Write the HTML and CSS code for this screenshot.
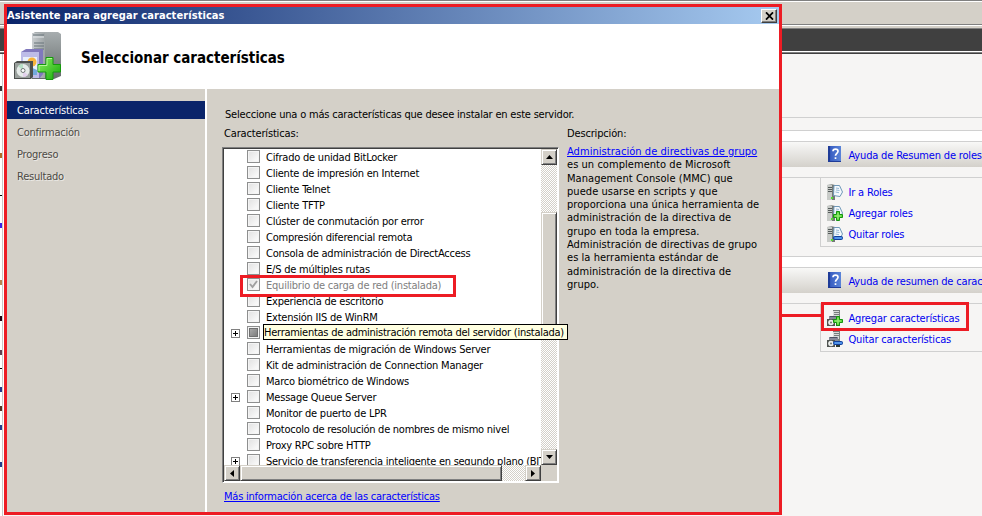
FILE: index.html
```html
<!DOCTYPE html>
<html lang="es">
<head>
<meta charset="utf-8">
<title>Asistente para agregar características</title>
<link rel="stylesheet" href="styles.css">
</head>
<body>
<svg width="0" height="0" class="defs">
  <defs>
    <linearGradient id="tower" x1="0" x2="1"><stop offset="0" stop-color="#c9cdd0"/><stop offset="1" stop-color="#9da3a5"/></linearGradient>
    <linearGradient id="side" x1="0" y1="0" x2="0" y2="1"><stop offset="0" stop-color="#a7adaf"/><stop offset="1" stop-color="#646b6a"/></linearGradient>
    <linearGradient id="green" x1="0" y1="0" x2="1" y2="1"><stop offset="0" stop-color="#8cf060"/><stop offset="1" stop-color="#14a808"/></linearGradient>
    <linearGradient id="book" x1="0" x2="1"><stop offset="0" stop-color="#2346a8"/><stop offset="0.25" stop-color="#3c62c4"/><stop offset="1" stop-color="#5a84d8"/></linearGradient>
    <symbol id="i-help" viewBox="0 0 13 16">
      <rect width="13" height="16" fill="url(#book)"/><rect width="2" height="16" fill="#1f3c98"/><rect y="15" width="13" height="1" fill="#1f3c98"/>
      <path d="M5 5.2C5 2.4 10 2.4 10 5.2C10 7.3 7.5 7.3 7.5 9.8M7.5 11.3V13" fill="none" stroke="#fff" stroke-width="1.7"/>
    </symbol>
    <symbol id="i-server" viewBox="0 0 16 16">
      <path d="M0 1L5 0L8 1V16H0Z" fill="#9a9e9c"/><path d="M0 1H5V16H0Z" fill="#c8cbc8"/><path d="M1 3.5H6M1 5.5H6M1 7.5H6" stroke="#555b5b"/><path d="M5 1L8 1V16H5Z" fill="#747977"/><rect x="4" y="13" width="2" height="2" fill="#55dd33"/>
    </symbol>
    <symbol id="i-page" viewBox="0 0 16 16">
      <path d="M7 1.5L12.5 1.5L15.5 8L13 12.5L6.5 11.5Z" fill="#f4f9fd" stroke="#6f98b8" stroke-width="1"/><path d="M9 4L12 4.5M9 6L12.5 6.5M8.5 8L12 8.7" stroke="#7fa8cc" stroke-width=".8"/>
    </symbol>
    <symbol id="i-disc" viewBox="0 0 16 16">
      <path d="M6 0H13V9H6Z" fill="#d9dbda"/><path d="M6 .5H13M7 2.5H12M7 4.5H12" stroke="#777d7c"/><path d="M12 1H13V16H9V8H12Z" fill="#7c8380"/><path d="M2 6H11V11H2Z" fill="#858998"/><path d="M3 6.5H10" stroke="#4d5264"/><path d="M0 9H8V16H0Z" fill="#515451"/><circle cx="4" cy="12.5" r="2.8" fill="#ecefec"/><circle cx="4" cy="12.5" r=".9" fill="#626b68"/><path d="M9 15H13" stroke="#2e3830" stroke-width="2"/>
    </symbol>
    <symbol id="i-plus" viewBox="0 0 16 16">
      <path d="M9.5 6.5H12.5V9.5H15.5V12.5H12.5V15.5H9.5V12.5H6.5V9.5H9.5Z" fill="#5cd83c" stroke="#159510"/><path d="M11 8V14M8 11H14" stroke="#a5f085" stroke-width=".9"/>
    </symbol>
    <symbol id="i-minus" viewBox="0 0 16 16">
      <rect x="6.500" y="10.500" width="9" height="3" rx="1" fill="#2f77dc" stroke="#123f98"/><path d="M8 12H14.500" stroke="#79b4f6"/>
    </symbol>
  </defs>
</svg>

<div class="screen">
  <main class="app">
    <div class="toolbar"></div>
    <div class="banner"></div>
    <section class="summary"></section>
    <div class="gap"></div>
    <section class="block">
      <header class="bar"><svg class="help"><use href="#i-help"/></svg><a>Ayuda de Resumen de roles</a></header>
      <div class="pane">
        <ul class="links">
          <li><svg class="ico"><use href="#i-server"/><use href="#i-page"/></svg><a>Ir a Roles</a></li>
          <li><svg class="ico"><use href="#i-server"/><use href="#i-page"/><use href="#i-plus"/></svg><a>Agregar roles</a></li>
          <li><svg class="ico"><use href="#i-server"/><use href="#i-page"/><use href="#i-minus"/></svg><a>Quitar roles</a></li>
        </ul>
      </div>
    </section>
    <div class="gap second"></div>
    <section class="block last">
      <header class="bar"><svg class="help"><use href="#i-help"/></svg><a>Ayuda de resumen de características</a></header>
      <div class="pane">
        <ul class="links short">
          <li><svg class="ico"><use href="#i-disc"/><use href="#i-plus"/></svg><a>Agregar características</a></li>
          <li><svg class="ico"><use href="#i-disc"/><use href="#i-minus"/></svg><a>Quitar características</a></li>
        </ul>
      </div>
    </section>
  </main>
  <div class="edge">
    <i class="m1"></i><i class="m2"></i><i class="m3"></i><i class="m4"></i><i class="m5"></i><i class="m6"></i><i class="m7"></i><i class="m8"></i><i class="m9"></i><i class="m10"></i><i class="m11"></i><i class="m12"></i>
  </div>

  <div class="wizard">
    <div class="title"><span>Asistente para agregar características</span>
      <b class="close"><svg width="9" height="8" viewBox="0 0 9 8"><path d="M1 .3L8 7.7M8 .3L1 7.7" stroke="#000" stroke-width="1.7"/></svg></b>
    </div>
    <div class="head">
      <svg class="logo" width="50" height="50" viewBox="0 0 50 50">
        <path d="M18 2L21 0H44L47 2V44L40 47H18Z" fill="url(#side)"/>
        <path d="M18 1H31V46H18Z" fill="url(#tower)"/>
        <path d="M19 3H30M20 11H30M20 14H30M20 17H30" stroke="#69747b" stroke-width="1.2"/><path d="M19 5H30" stroke="#e4e8ea"/>
        <path d="M7 20L12 17H29V42L26 46H7Z" fill="#8078bd"/><path d="M7 20H25V46H7Z" fill="#bdbce8"/><path d="M9 25H23V43H9Z" fill="#e9f0fc"/><circle cx="18" cy="30" r="4.500" fill="#f7b43c"/><path d="M9 38L14 34L23 38V43H9Z" fill="#73a9dc"/>
        <path d="M0 31L3 29H19V45L17 47H0Z" fill="#4c4f4d"/><path d="M1 31H16V46H1Z" fill="#9aa09d"/>
        <circle cx="9" cy="38.500" r="6.500" fill="#e6ebe9"/><path d="M9 38.500L4 34A6.500 6.500 0 0 1 9 32Z" fill="#b7dfc6"/><path d="M9 38.500L14 43A6.500 6.500 0 0 1 9 45Z" fill="#e3d2ec"/><circle cx="9" cy="38.500" r="2" fill="#fff" stroke="#727977"/>
        <path d="M32 25.500H39V32.500H46.500V40H39V47.500H32V40H24V32.500H32Z" fill="url(#green)" stroke="#159a0c"/><path d="M33 33.500V26.500H38M25 39V33.500H33" fill="none" stroke="#b5f59a"/>
      </svg>
      <h1>Seleccionar características</h1>
    </div>
    <div class="body">
      <nav class="steps"><a class="on">Características</a><a>Confirmación</a><a>Progreso</a><a>Resultado</a></nav>
      <div class="content">
        <p class="intro">Seleccione una o más características que desee instalar en este servidor.</p>
        <div class="cols">
          <div class="left">
            <p class="label">Características:</p>
            <div class="listbox">
              <div class="list">
                <div class="row"><i></i><b></b>Cifrado de unidad BitLocker</div>
                <div class="row"><i></i><b></b>Cliente de impresión en Internet</div>
                <div class="row"><i></i><b></b>Cliente Telnet</div>
                <div class="row"><i></i><b></b>Cliente TFTP</div>
                <div class="row"><i></i><b></b>Clúster de conmutación por error</div>
                <div class="row"><i></i><b></b>Compresión diferencial remota</div>
                <div class="row"><i></i><b></b>Consola de administración de DirectAccess</div>
                <div class="row"><i></i><b></b>E/S de múltiples rutas</div>
                <div class="row off"><i></i><b><svg width="9" height="9" viewBox="0 0 9 9"><path d="M1 4L3.500 7L8 1" fill="none" stroke="#a0a0a0" stroke-width="1.900"/></svg></b>Equilibrio de carga de red (instalada)</div>
                <div class="row"><i></i><b></b>Experiencia de escritorio</div>
                <div class="row"><i></i><b></b>Extensión IIS de WinRM</div>
                <div class="row"><i class="exp"></i><b class="part"></b></div>
                <div class="row"><i></i><b></b>Herramientas de migración de Windows Server</div>
                <div class="row"><i></i><b></b>Kit de administración de Connection Manager</div>
                <div class="row"><i></i><b></b>Marco biométrico de Windows</div>
                <div class="row"><i class="exp"></i><b></b>Message Queue Server</div>
                <div class="row"><i></i><b></b>Monitor de puerto de LPR</div>
                <div class="row long"><i></i><b></b>Protocolo de resolución de nombres de mismo nivel</div>
                <div class="row"><i></i><b></b>Proxy RPC sobre HTTP</div>
                <div class="row long"><i class="exp"></i><b></b>Servicio de transferencia inteligente en segundo plano (BITS)</div>
              </div>
              <div class="vbar"><span class="btn"><svg width="7" height="4"><path d="M0 4L3.500 0L7 4Z"/></svg></span><span class="vthumb"></span><span class="btn"><svg width="7" height="4"><path d="M0 0H7L3.500 4Z"/></svg></span></div>
              <div class="hbar"><span class="btn"><svg width="4" height="7"><path d="M4 0V7L0 3.500Z"/></svg></span><span class="hthumb"></span><span class="btn"><svg width="4" height="7"><path d="M0 0V7L4 3.500Z"/></svg></span></div>
              <div class="corner"></div>
            </div>
            <a class="more">Más información acerca de las características</a>
          </div>
          <div class="desc">
            <p class="label">Descripción:</p>
            <p class="text"><a>Administración de directivas de grupo</a><br>es un complemento de Microsoft<br>Management Console (MMC) que<br>puede usarse en scripts y que<br>proporciona una única herramienta de<br>administración de la directiva de<br>grupo en toda la empresa.<br>Administración de directivas de grupo<br>es la herramienta estándar de<br>administración de la directiva de<br>grupo.</p>
          </div>
        </div>
      </div>
    </div>
  </div>
  <div class="tip">Herramientas de administración remota del servidor (instalada)</div>
  <div class="mark network"></div>
  <div class="mark add"></div>
  <div class="connector"></div>
</div>
</body>
</html>
```
FILE: styles.css
```css
* { box-sizing: border-box; }
body { margin: 0; font: 11px/16px "DejaVu Sans Condensed", "DejaVu Sans", sans-serif; letter-spacing: -0.22px; color: #000; }
p, h1, ul { margin: 0; padding: 0; }
.defs { position: absolute; }
.screen { position: relative; width: 982px; height: 516px; overflow: hidden; background: #f6f5f4; white-space: nowrap; }

/* server manager window */
.app { display: flex; flex-direction: column; height: 516px; }
.app a { color: #0000f0; letter-spacing: -0.17px; }
.toolbar { height: 26px; background: #d4d0c8; border-top: 1px solid #808080; border-bottom: 1px solid #fff; box-shadow: inset 0 1px #fff, inset 0 -1px #808080; }
.banner { height: 28px; background: #404040; border-top: 2px solid #d4d0c8; border-bottom: 1px solid #404040; box-shadow: inset 0 1px #808080, inset 0 -1px #808080, inset 0 -2px #fff; }
.summary { height: 77px; border-bottom: 1px solid #d0d0d0; background: linear-gradient(#d0d0d0, #d0d0d0) 0 63px / 100% 1px no-repeat; }
.gap { height: 10px; background: #fff; }
.block { height: 116px; border: 1px solid #d0d0d0; border-width: 1px 0; }
.bar { display: flex; align-items: center; height: 25px; padding-left: 828px; background: linear-gradient(#f8f8f7, #d4d1cb); }
.bar a { margin-left: 7.500px; padding-top: 2px; }
.help { width: 13px; height: 16px; flex: none; margin-bottom: 1px; }
.pane { margin-top: 10px; border-top: 1px solid #d0d0d0; padding-left: 820px; }
.links { list-style: none; height: 69px; padding: 4px 0 0 6px; border: 1px solid #d0d0d0; border-width: 0 0 1px 1px; }
.links li { display: flex; align-items: center; height: 21px; }
.links li a { margin-left: 5.500px; padding-top: 1px; }
.ico { width: 16px; height: 16px; flex: none; margin-bottom: 2px; }
.second { height: 10px; }
.last { border-bottom: 0; }
.short { height: 48px; }

/* sliver of the window visible left of the wizard */
.edge { position: absolute; left: 0; top: 54px; width: 4px; height: 462px; background: linear-gradient(90deg, #fff 2px, #c8c8c8 2px, #c8c8c8 3px, #fff 3px); }
.edge i { position: absolute; left: 0; width: 2px; height: 5px; background: #223a8c; }
.edge .m1 { top: 32px; background: #333; }
.edge .m2 { top: 99px; background: #b06c28; }
.edge .m3 { top: 141px; height: 1px; background: #000; }
.edge .m4 { top: 169px; background: #3b20e8; }
.edge .m5 { top: 226px; background: #b58450; }
.edge .m6 { top: 262px; background: #200010; }
.edge .m7 { top: 296px; background: #604050; }
.edge .m8 { top: 314px; height: 1px; background: #000; }
.edge .m9 { top: 333px; }
.edge .m10 { top: 352px; background: #553322; }
.edge .m11 { top: 371px; }
.edge .m12 { top: 408px; }

/* wizard */
.wizard { position: absolute; left: 4px; top: 4px; width: 778px; height: 511px; border: 3px solid #ed1c24; background: #d4d0c8; display: flex; flex-direction: column; }
.title { display: flex; justify-content: space-between; align-items: center; height: 17px; padding-right: 2px; background: linear-gradient(90deg, #0a246a, #a6caf0); color: #fff; font-weight: bold; letter-spacing: 0.08px; }
.close { display: grid; place-items: center; width: 16px; height: 14px; background: #d4d0c8; border: 1px solid; border-color: #fff #404040 #404040 #fff; box-shadow: inset -1px -1px #808080; }
.head { display: flex; align-items: center; height: 65px; background: #fff; }
.logo { margin-left: 7px; margin-top: 1px; }
.head h1 { margin-left: 17px; padding-top: 3px; font-size: 15px; letter-spacing: -0.03px; }
.body { flex: 1; display: flex; }
.steps { width: 200px; padding-top: 12px; border-right: 2px solid #fff; display: flex; flex-direction: column; gap: 4px; }
.steps a { height: 18px; line-height: 20px; padding-left: 10px; color: #4d4a45; text-shadow: 1px 1px #ebe9e5; }
.steps .on { background: #0a246a; color: #fff; text-shadow: none; letter-spacing: -0.15px; }
.content { flex: 1; padding: 18px 0 0 15px; }
.intro { padding-left: 3px; letter-spacing: -0.2px; }
.cols { display: flex; gap: 8px; padding-top: 3px; }
.label { padding-left: 2px; letter-spacing: -0.16px; }
.listbox { display: grid; grid-template: 316px 16px / 317px 16px; width: 337px; height: 336px; margin-top: 5px; border: 1px solid; border-color: #808080 #fff #fff #808080; box-shadow: inset 1px 1px #404040; padding: 1px; background: #fff; }
.left { width: 337px; }
.list { overflow: hidden; padding-top: 1px; height: 316px; }
.row { display: flex; align-items: center; height: 16px; padding-left: 7px; letter-spacing: -0.22px; }
.long { letter-spacing: -0.26px; }
.row i { width: 9px; height: 9px; flex: none; margin: 0 7px 1px 0; }
.row b { display: grid; place-items: center; width: 13px; height: 13px; flex: none; margin: 0 6px 3px 0; border: 1px solid #8e8f8f; background: linear-gradient(135deg, #e6e6e6 20%, #f8f8f8 80%); box-shadow: inset 0 0 0 1px #f4f4f4; }
.row .exp { border: 1px solid #808080; background: linear-gradient(#000, #000) center / 5px 1px no-repeat, linear-gradient(#000, #000) center / 1px 5px no-repeat; }
.row .part { background: linear-gradient(135deg, #b0b0b0, #777) center / 9px 9px no-repeat; box-shadow: inset 0 0 0 1px #f4f4f4, inset 0 0 0 2px #707070; }
.off { color: #808080; }
.vbar, .hbar { display: flex; background: repeating-conic-gradient(#d4d0c8 0 25%, #fff 0 50%) 0 0 / 2px 2px; }
.vbar { flex-direction: column; }
.btn { display: grid; place-items: center; width: 16px; height: 16px; flex: none; }
.btn, .vthumb, .hthumb { background: #d4d0c8; border: 1px solid; border-color: #d4d0c8 #404040 #404040 #d4d0c8; box-shadow: inset 1px 1px #fff, inset -1px -1px #808080; }
.vthumb { height: 125px; margin: 47px 0 auto; }
.hthumb { width: 262px; margin-right: auto; }
.corner { background: #d4d0c8; }
.more { display: block; margin: 6px 0 0 2px; color: #00f; text-decoration: underline; }
.desc .text { margin-top: 3px; line-height: 13.300px; letter-spacing: 0.05px; }
.desc .label, .desc .text { padding-left: 0; }
.desc a { color: #00f; text-decoration: underline; }

/* overlays */
.tip { position: absolute; left: 263px; top: 324px; width: 305px; height: 16px; line-height: 15px; border: 1px solid #000; background: #ffffe1; letter-spacing: -0.26px; }
.mark { position: absolute; border: 3px solid #ed1c24; }
.network { left: 240px; top: 275px; width: 216px; height: 22px; }
.add { left: 821px; top: 302px; width: 148px; height: 29px; }
.connector { position: absolute; left: 781px; top: 314px; width: 41px; height: 3px; background: #ed1c24; }
```
